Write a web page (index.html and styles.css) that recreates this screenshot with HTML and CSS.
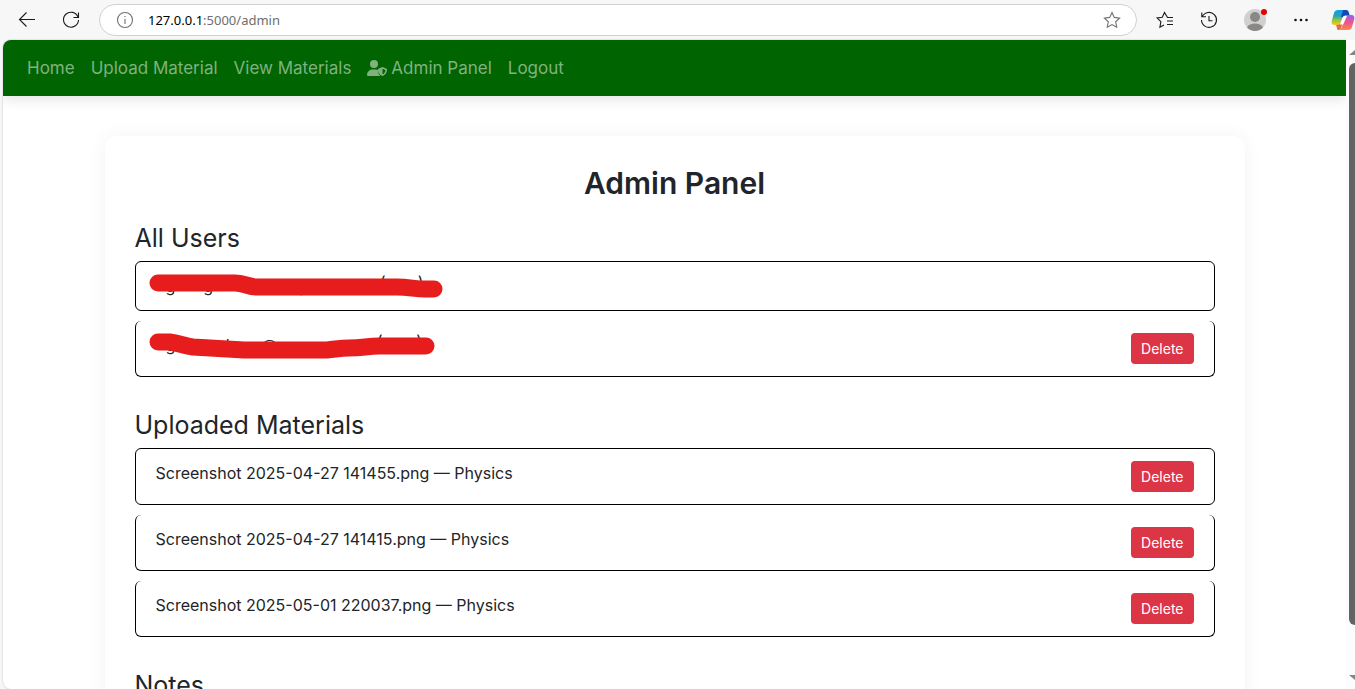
FILE: index.html
```html
<!DOCTYPE html>
<html lang="en">
<head>
<meta charset="utf-8">
<title>Admin Panel</title>
<link rel="stylesheet" href="styles.css">
</head>
<body>
<header class="toolbar">
  <button class="tool" aria-label="Back"><svg width="20" height="20" viewBox="0 0 20 20"><path d="M18 9.500H3M9.500 2.500l-7 7 7 7"/></svg></button>
  <button class="tool" aria-label="Refresh"><svg width="20" height="20" viewBox="0 0 20 20"><path d="M17 7A7.500 7.500 0 1 0 17.500 10M17.500 2.500V7.500H12.500"/></svg></button>
  <div class="address">
    <svg class="grey" width="18" height="18" viewBox="0 0 18 18"><circle cx="9" cy="9" r="7.500"/><path d="M9 8v5M9 5v1.200"/></svg>
    <div class="url"><b>127.0.0.1</b>:5000/admin</div>
    <button class="star grey" aria-label="Add to favourites"><svg width="18" height="18" viewBox="0 0 18 18"><path d="M9 1.500l2.300 4.900 5.300.7-3.900 3.700 1 5.400L9 13.600l-4.700 2.600 1-5.400L1.400 7.100l5.300-.7z"/></svg></button>
  </div>
  <nav class="tools" aria-label="Browser tools">
    <button class="tool" aria-label="Favourites"><svg width="20" height="20" viewBox="0 0 20 20"><path d="M18 7.500h-5.500L9.500 2.500 7.300 7.200l-5.200.7 3.800 3.700-1 5.600 4.100-2.300M12 11h6M12 14.500h6"/></svg></button>
    <button class="tool" aria-label="History"><svg width="20" height="20" viewBox="0 0 20 20"><path d="M3.300 6.500A7.500 7.500 0 1 1 2.500 10M2.800 2.500v4.200H7M10 6v4.800h3.500"/></svg></button>
    <button class="tool profile" aria-label="Profile"><svg width="24" height="24" viewBox="0 0 24 24"><circle cx="12" cy="12" r="11" fill="#d2d0ce" stroke="none"/><circle cx="12" cy="9" r="5" fill="#8a8886" stroke="none"/><path d="M4 19.500c1.500-3 4.500-4 8-4s6.500 1 8 4a11 11 0 0 1-16 0z" fill="#8a8886" stroke="none"/><circle cx="21" cy="4" r="3" fill="#e60000" stroke="none"/></svg></button>
    <button class="tool" aria-label="More"><svg width="20" height="20" viewBox="0 0 20 20"><g fill="#111" stroke="none"><circle cx="4.500" cy="10" r="1.300"/><circle cx="10" cy="10" r="1.300"/><circle cx="15.500" cy="10" r="1.300"/></g></svg></button>
    <button class="tool copilot" aria-label="Copilot"><svg width="24" height="22" viewBox="0 0 24 22">
      <defs>
        <linearGradient id="cool" x1="0" y1="0" x2="0" y2="1"><stop offset="0" stop-color="#159be8"/><stop offset=".4" stop-color="#22a4b8"/><stop offset=".65" stop-color="#8bc34a"/><stop offset="1" stop-color="#ffcb12"/></linearGradient>
        <linearGradient id="warm" x1="0" y1="0" x2="0" y2="1"><stop offset="0" stop-color="#9b5cf0"/><stop offset=".5" stop-color="#ed558f"/><stop offset="1" stop-color="#ff8a43"/></linearGradient>
      </defs>
      <g stroke="none"><path d="M7 1h9c-4 1-4 8-6 12-1 2-2 3-4 3H4c-3 0-4-2-3-5L3 4c.6-2 2-3 4-3z" fill="url(#cool)"/><path d="M12 1h3c2 0 2.500 1 3 3l.6 2H16c-2 0-3 1-3.600 2.500L10 8z" fill="#1748b8"/><path d="M16 6h4c3 0 4 2 3 5l-2 7c-.6 2-2 3-4 3H8c4-1 4-8 5-11 .7-2 1-4 3-4z" fill="url(#warm)"/><path d="M5 16c3 0 4-1 5-3l2 1-2 5c-.5 1.500-1.500 2-3 2-1 0-1-3-2-5z" fill="#ed6a3c"/><path d="M12.500 7h3.500l-3.800 8.500H8.800z" fill="#fff"/></g>
    </svg></button>
  </nav>
</header>
<div class="frame">
  <div class="page">
    <nav class="navbar" aria-label="Main">
      <a href="#">Home</a>
      <a href="#">Upload Material</a>
      <a href="#">View Materials</a>
      <a href="#"><svg width="20" height="16" viewBox="0 0 640 512" fill="currentColor"><circle cx="224" cy="128" r="128"/><path d="M174 304h100c31 0 57 6 82 19-8 82 22 143 70 189H30c-17 0-30-13-30-30 0-98 78-178 174-178z"/><path fill-rule="evenodd" d="M496 225l133 54c7 3 11 8 11 15 0 78-30 178-144 218-114-40-144-140-144-218 0-7 4-12 11-15zm0 53v179c63-26 92-82 95-141z"/></svg> Admin Panel</a>
      <a href="#">Logout</a>
    </nav>
    <main class="panel">
      <h1>Admin Panel</h1>
      <section>
        <h2>All Users</h2>
        <ul>
          <li><div class="masked" aria-hidden="true"><span>g</span><span>g</span><span>g</span><span class="tall">(</span><span class="tall">)</span><svg class="stroke" width="300" height="40" viewBox="0 0 300 40"><path d="M11 17H88C96 17 102 21 110 21H250C262 21 268 23 278 23H287"/></svg></div></li>
          <li><div class="masked second" aria-hidden="true"><span>g</span><span>l</span><span>@</span><span class="tall">(</span><span class="tall">)</span><svg class="stroke" width="300" height="40" viewBox="0 0 300 40"><path d="M11 17H23C31 18 38 21 46 22L97 25H180C190 24 194 23 202 23C216 23 220 21 232 21H279"/></svg></div><button class="delete">Delete</button></li>
        </ul>
      </section>
      <section>
        <h2>Uploaded Materials</h2>
        <ul>
          <li><span>Screenshot 2025-04-27 141455.png — Physics</span><button class="delete">Delete</button></li>
          <li><span>Screenshot 2025-04-27 141415.png — Physics</span><button class="delete">Delete</button></li>
          <li><span>Screenshot 2025-05-01 220037.png — Physics</span><button class="delete">Delete</button></li>
        </ul>
      </section>
      <section>
        <h2>Notes</h2>
      </section>
    </main>
  </div>
  <div class="scrollbar" aria-hidden="true"><i class="up"></i><i class="thumb"></i><i class="down"></i></div>
</div>
</body>
</html>
```
FILE: styles.css
```css
* { box-sizing: border-box; }
body {
  margin: 0;
  height: 100vh;
  display: flex;
  flex-direction: column;
  overflow: hidden;
  background: #f7f7f7;
  color: #212529;
  font: 16px/24px Inter, sans-serif;
}
button { border: 0; padding: 0; background: none; font: inherit; }
svg { display: block; flex: none; }

.toolbar {
  flex: none;
  height: 40px;
  display: flex;
  align-items: center;
  padding-left: 17px;
}
.toolbar svg { fill: none; stroke: #1b1b1b; stroke-width: 1.1; }
.tool { flex: none; width: 20px; display: flex; justify-content: center; }
.tool + .tool { margin-left: 24px; }
.address {
  flex: 1;
  height: 32px;
  margin-left: 18px;
  padding: 0 15px 0 16px;
  display: flex;
  align-items: center;
  gap: 14px;
  border: 1px solid #d1d1d1;
  border-radius: 16px;
  background: #fff;
}
.toolbar .grey, .toolbar .grey svg { stroke: #707070; }
.url { flex: 1; color: #6e6e6e; font: 13px/20px "Noto Sans", sans-serif; }
.url b { color: #000; font-weight: 400; }
.tools { display: flex; align-items: center; padding-left: 18px; }
.tools .profile { width: 24px; }
.tools .tool + .profile { margin-left: 24px; }
.tools .copilot { width: 24px; margin-left: 20px; }
.tools { margin-right: 0; }

.frame { flex: 1; min-height: 0; display: flex; padding-left: 3px; }
.page {
  flex: 1;
  overflow: hidden;
  border-radius: 8px 0 0 8px;
  background: #fff;
  box-shadow: 0 0 2px rgba(0, 0, 0, .25);
}
.navbar {
  height: 56px;
  display: flex;
  align-items: center;
  gap: 16px;
  padding: 0 24px;
  background: #006400;
  box-shadow: 0 4px 12px rgba(0, 0, 0, .1);
}
.navbar a {
  display: flex;
  align-items: center;
  gap: 4px;
  color: #80b280;
  font-size: 17px;
  text-decoration: none;
  white-space: nowrap;
}
.panel {
  max-width: 1140px;
  min-height: 100vh;
  margin: 40px auto 0;
  padding: 30px;
  border-radius: 12px;
  background: #fff;
  box-shadow: 0 0 20px rgba(0, 0, 0, .05);
}
h1 { margin: 0 0 24px; font-size: 30px; line-height: 34px; font-weight: 600; text-align: center; }
h2 { margin: 0 0 8px; font-size: 25px; line-height: 29px; font-weight: 400; }
section { margin-bottom: 34px; }
ul { margin: 0; padding: 0; list-style: none; display: grid; gap: 10px; }
li {
  display: flex;
  align-items: flex-start;
  justify-content: space-between;
  padding: 12px 20px;
  border: 1px solid #000;
  border-radius: 6px;
}
li + li { border-top-width: 0; }
.delete {
  padding: 5px 10px;
  border-radius: 4px;
  background: #dc3545;
  color: #fff;
  font-size: 14px;
  line-height: 21px;
}
.masked { position: relative; height: 24px; width: 290px; display: flex; }
.masked span { width: 41px; padding-left: 10px; }
.masked span:nth-child(3) { width: 147px; padding-left: 65px; }
.masked .tall { line-height: 16px; }
.second span:nth-child(2) { width: 69px; padding-left: 31px; }
.second span:nth-child(3) { width: 111px; padding-left: 0; }
.stroke { position: absolute; left: -9px; top: -8px; }
.stroke path { fill: none; stroke: #e71d1d; stroke-width: 17; stroke-linecap: round; stroke-linejoin: round; }

.scrollbar {
  flex: none;
  width: 9px;
  padding: 10px 0 9px 3px;
  display: flex;
  flex-direction: column;
  overflow: hidden;
  background: #fcfcfc;
}
.scrollbar i { flex: none; width: 12px; }
.up { border: 6px solid transparent; border-top: 0; border-bottom: 5px solid #858585; }
.scrollbar .thumb { flex: 1; margin-top: 8px; border-radius: 6px; background: #636363; }
.down { border: 6px solid transparent; border-bottom: 0; border-top: 5px solid #858585; margin-top: 50px; }
```
